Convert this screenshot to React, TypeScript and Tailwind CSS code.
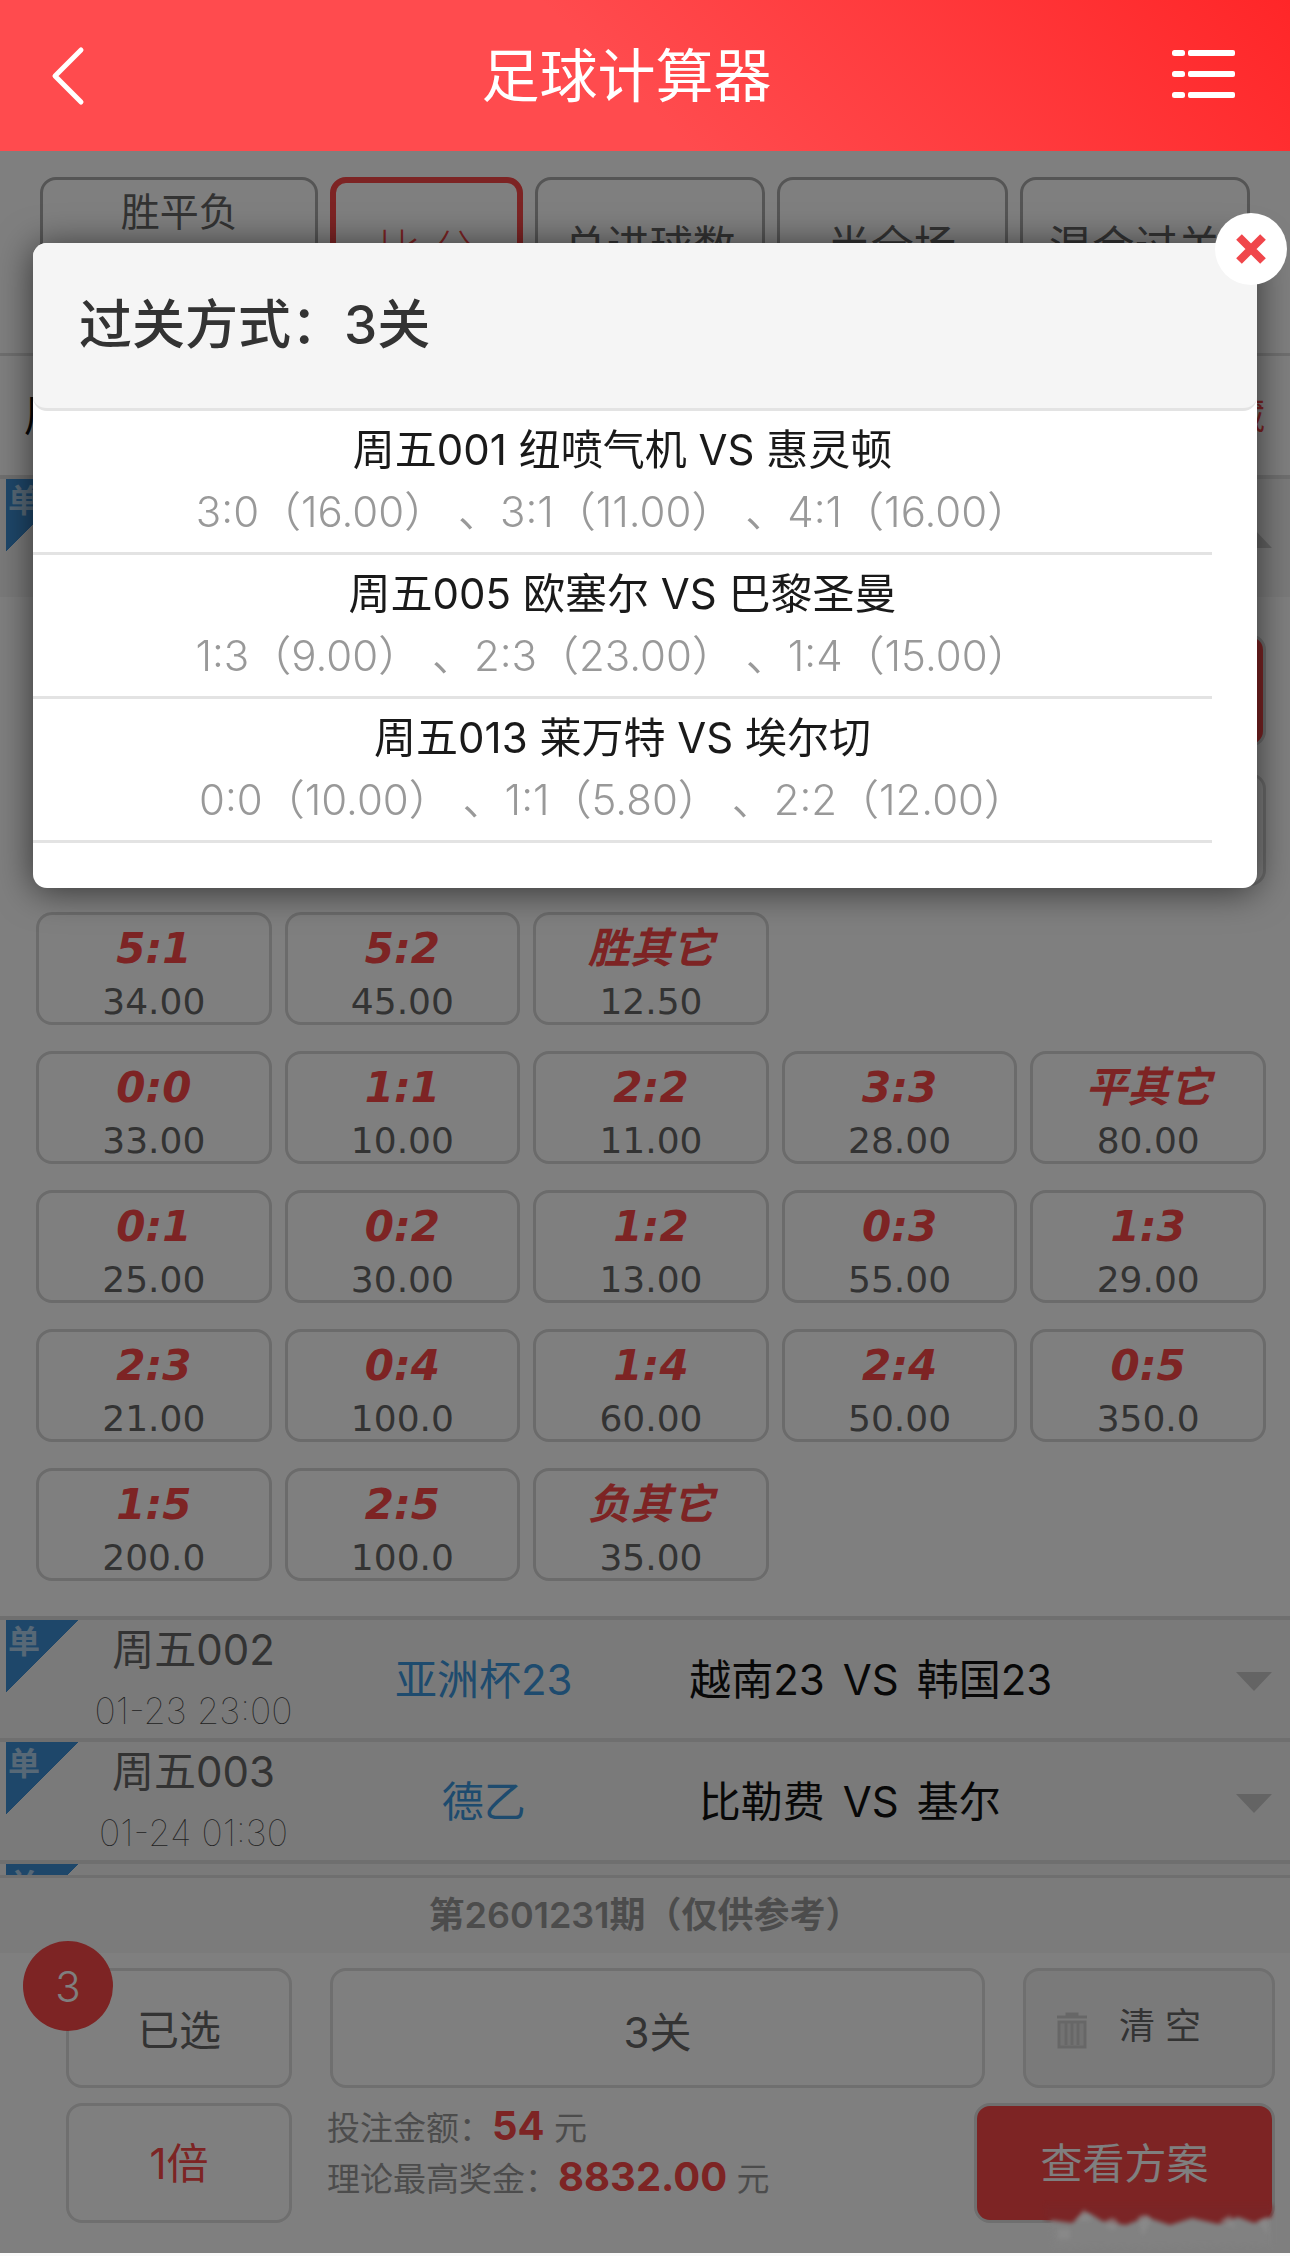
import { useState } from "react";
import clsx from "clsx";

type Score = { score: string; odds?: string; picked?: boolean };
type Match = { no: string; time: string; league: string; home: string; away: string };
type Pick = { title: string; options: [string, string][] };

const SCORES: Score[][] = [
  [
    { score: "1:0" },
    { score: "2:0" },
    { score: "2:1" },
    { score: "3:0", odds: "16.00", picked: true },
    { score: "3:1", odds: "11.00", picked: true },
  ],
  [
    { score: "3:2" },
    { score: "4:0" },
    { score: "4:1", odds: "16.00", picked: true },
    { score: "4:2" },
    { score: "5:0" },
  ],
  [
    { score: "5:1", odds: "34.00" },
    { score: "5:2", odds: "45.00" },
    { score: "胜其它", odds: "12.50" },
  ],
  [
    { score: "0:0", odds: "33.00" },
    { score: "1:1", odds: "10.00" },
    { score: "2:2", odds: "11.00" },
    { score: "3:3", odds: "28.00" },
    { score: "平其它", odds: "80.00" },
  ],
  [
    { score: "0:1", odds: "25.00" },
    { score: "0:2", odds: "30.00" },
    { score: "1:2", odds: "13.00" },
    { score: "0:3", odds: "55.00" },
    { score: "1:3", odds: "29.00" },
  ],
  [
    { score: "2:3", odds: "21.00" },
    { score: "0:4", odds: "100.0" },
    { score: "1:4", odds: "60.00" },
    { score: "2:4", odds: "50.00" },
    { score: "0:5", odds: "350.0" },
  ],
  [
    { score: "1:5", odds: "200.0" },
    { score: "2:5", odds: "100.0" },
    { score: "负其它", odds: "35.00" },
  ],
];

const MATCHES: Match[] = [
  { no: "周五002", time: "01-23 23:00", league: "亚洲杯23", home: "越南23", away: "韩国23" },
  { no: "周五003", time: "01-24 01:30", league: "德乙", home: "比勒费", away: "基尔" },
];

const PICKS: Pick[] = [
  { title: "周五001 纽喷气机 VS 惠灵顿", options: [["3:0", "16.00"], ["3:1", "11.00"], ["4:1", "16.00"]] },
  { title: "周五005 欧塞尔 VS 巴黎圣曼", options: [["1:3", "9.00"], ["2:3", "23.00"], ["1:4", "15.00"]] },
  { title: "周五013 莱万特 VS 埃尔切", options: [["0:0", "10.00"], ["1:1", "5.80"], ["2:2", "12.00"]] },
];

const TABS = ["胜平负", "比 分", "总进球数", "半全场", "混合过关"];

// rows of the score grid that sit behind the dialog while it is open
const COVERED_ROWS = 2;

function Header() {
  return (
    <header className="flex h-[151px] shrink-0 items-center justify-between bg-[linear-gradient(45deg,#ff4b4e_48%,#ff2628)] pl-[51px] pr-[55px] text-white">
      <button type="button" aria-label="返回">
        <svg width="34" height="60" viewBox="0 0 34 60" fill="none" stroke="currentColor" strokeWidth="5" strokeLinecap="round" strokeLinejoin="round">
          <path d="M30 4 4 30l26 26" />
        </svg>
      </button>
      <h1 className="pr-1 text-[58px] leading-[80px]">足球计算器</h1>
      <button type="button" aria-label="菜单" className="pb-1">
        <svg width="63" height="50" viewBox="0 0 63 50" fill="currentColor">
          {[1, 22, 43].map((y) => (
            <g key={y}>
              <rect x="0" y={y} width="13" height="6" rx="2.5" />
              <rect x="16" y={y} width="47" height="6" rx="2" />
            </g>
          ))}
        </svg>
      </button>
    </header>
  );
}

function Tabs() {
  const [active, setActive] = useState(1);
  return (
    <nav className="grid grid-cols-[29fr_20fr_24fr_24fr_24fr] gap-3 px-10 pb-[37px] pt-[26px]">
      {TABS.map((tab, i) => (
        <button
          key={tab}
          type="button"
          onClick={() => setActive(i)}
          className={clsx(
            "flex h-[139px] justify-center whitespace-nowrap rounded-2xl",
            i === 0 ? "items-start pt-1 text-[39px] leading-[56px]" : "items-center text-[43px]",
            i === active ? "border-[6px] border-[#fa4848] pt-2 font-light text-[#fa4848]" : "border-[3px] border-[#aaa] text-[#666]"
          )}
        >
          {tab}
        </button>
      ))}
    </nav>
  );
}

function SingleBadge() {
  return (
    <span className="absolute left-[6px] top-0 h-[73px] w-[73px] bg-[linear-gradient(135deg,#3c8fd4_50%,transparent_50%)] pl-[2px] text-[32px] font-bold leading-[44px] text-white/60">
      单
    </span>
  );
}

function Arrow({ up }: { up?: boolean }) {
  return (
    <svg width="36" height="19" viewBox="0 0 36 19" className="fill-[#c8c8c8]">
      <path d={up ? "M0 19 18 0l18 19z" : "M0 0h36L18 19z"} />
    </svg>
  );
}

function MatchRow({ match, open }: { match?: Match; open?: boolean }) {
  return (
    <div className="relative grid h-[122px] shrink-0 grid-cols-[30%_15%_45%_10%] items-center border-t-4 border-[#dfdfdf] bg-[#f5f5f5] text-[42px]">
      <SingleBadge />
      <div className="self-start text-center">
        <div className="leading-[60px] text-[#666]">{match?.no}</div>
        <div className="text-[36px] font-thin leading-[62px] text-[#444]">{match?.time}</div>
      </div>
      <div className="pb-1 text-center text-[#3c96dc]">{match?.league}</div>
      <div className="grid grid-cols-[1fr_auto_1fr] gap-[18px] pb-1 text-[#111]">
        {match && (
          <>
            <span className="text-right">{match.home}</span>
            <span>VS</span>
            <span>{match.away}</span>
          </>
        )}
      </div>
      <div className="flex justify-end pr-[18px]">
        <Arrow up={open} />
      </div>
    </div>
  );
}

function ScoreGrid({ covered }: { covered: boolean }) {
  return (
    <div className="flex flex-col gap-[26px] bg-white pb-[35px] pl-9 pr-6 pt-[37px] font-['DejaVu_Sans','Noto_Sans_CJK_SC',sans-serif]">
      {SCORES.map((row, i) => (
        <div key={i} className="grid grid-cols-5 gap-[13px]">
          {row.map((cell) => (
            <button
              key={cell.score}
              type="button"
              aria-label={cell.score}
              aria-pressed={!!cell.picked}
              className={clsx(
                "h-[113px] rounded-2xl border-[3px] border-[#d6d6d6] pt-[6px]",
                cell.picked ? "bg-[#fa4848] text-white" : "text-[#666]"
              )}
            >
              {!(covered && i < COVERED_ROWS) && (
                <>
                  <span className={clsx("block text-[42px] font-bold italic leading-[56px]", !cell.picked && "text-[#fa4848]")}>
                    {cell.score}
                  </span>
                  <span className="block text-[36px] leading-[50px]">{cell.odds}</span>
                </>
              )}
            </button>
          ))}
        </div>
      ))}
    </div>
  );
}

const BOX = "flex h-[120px] items-center justify-center rounded-2xl border-[3px] border-[#dedede]";

function BetBar() {
  return (
    <footer className="shrink-0 border-t-[3px] border-[#dfdfdf] bg-white">
      <p className="bg-[#f7f7f7] text-center text-[36px] font-semibold leading-[75px] text-[#999]">
        第2601231期（仅供参考）
      </p>
      <div className="flex flex-col gap-[15px] pb-[30px] pl-[66px] pr-[15px] pt-[15px] text-[42px] text-[#666]">
        <div className="flex gap-[38px]">
          <button type="button" className={clsx(BOX, "relative w-[226px] pt-1")}>
            已选
            <span className="absolute -left-[46px] -top-[30px] flex h-[90px] w-[90px] items-center justify-center rounded-full bg-[#fa4848] font-light text-white">
              3
            </span>
          </button>
          <button type="button" className={clsx(BOX, "flex-1 pt-2")}>3关</button>
          <button type="button" className={clsx(BOX, "w-[252px] gap-8 bg-[#f5f5f5] pr-10 text-[36px]")}>
            <svg width="30" height="37" viewBox="0 0 30 37" fill="none" stroke="#cfcfcf" strokeWidth="3" className="mt-1">
              <path d="M0 5h30M10 4V2h10v2" />
              <path d="M2 10v25h26V10z" fill="#e4e4e4" />
              <path d="M9 11v22M15 11v22M21 11v22" />
            </svg>
            <span className="pb-1">清 空</span>
          </button>
        </div>
        <div className="flex">
          <button type="button" className={clsx(BOX, "w-[226px] text-[#fa4848]")}>1倍</button>
          <div className="flex-1 pl-[35px] text-[33px] leading-[51px] text-[#999]">
            <p>
              投注金额：<b className="text-[40px] leading-none text-[#fa4848]">54</b> 元
            </p>
            <p>
              理论最高奖金：<b className="text-[40px] leading-none text-[#fa4848]">8832.00</b> 元
            </p>
          </div>
          <button type="button" className={clsx(BOX, "w-[301px] bg-[#fa4848] text-white")}>查看方案</button>
        </div>
      </div>
    </footer>
  );
}

function PlanDialog({ onClose }: { onClose: () => void }) {
  return (
    <div
      role="dialog"
      aria-labelledby="plan-title"
      className="absolute inset-x-[33px] top-[92px] rounded-[14px] bg-white pb-[45px] shadow-[0_3px_36px_rgba(0,0,0,0.6)]"
    >
      <h2
        id="plan-title"
        className="rounded-[14px] border-b-[3px] border-[#e3e3e3] bg-[#f5f5f5] pl-[46px] text-[53px] font-medium leading-[165px] text-[#333]"
      >
        过关方式：3关
      </h2>
      <button
        type="button"
        aria-label="关闭"
        onClick={onClose}
        className="absolute -right-[30px] -top-[30px] flex h-[72px] w-[72px] items-center justify-center rounded-full bg-white"
      >
        <svg width="30" height="30" viewBox="0 0 30 30" stroke="#f0464b" strokeWidth="8">
          <path d="M3 3 27 27M27 3 3 27" />
        </svg>
      </button>
      <ul className="mr-[45px] text-center text-[42px] leading-[62px]">
        {PICKS.map((pick) => (
          <li key={pick.title} className="border-b-[3px] border-[#e3e3e3] pb-[9px] pt-2">
            <p className="text-[#1a1a1a]">{pick.title}</p>
            <p className="pr-5 font-[350] text-[#999]">
              {pick.options.map(([score, odds]) => `${score}（${odds}）`).join(" 、")}
            </p>
          </li>
        ))}
      </ul>
    </div>
  );
}

// faint smear left over the corner of the submit button
function Smear() {
  return (
    <svg width="236" height="56" viewBox="0 0 236 56" className="pointer-events-none absolute bottom-0 right-3">
      <g className="blur-[2px]">
        <path d="M8 16H230V48L12 50z" fill="#818181" />
        <path d="M2 8H230V20L212 26 196 20 176 27 150 21 128 28 104 20 84 28 60 24 44 14 30 26 2 22z" fill="#7b2526" />
      </g>
      <g className="blur-[2px]" fill="#8e8e8e" opacity="0.6">
        <path d="M34 24l8-12 8 12zM96 20q14-6 12 6l-8 14zM178 24l10-6 6 14z" />
        <circle cx="70" cy="27" r="6" />
        <path d="M16 32h12v10H16zM216 24l10-4v18z" />
      </g>
    </svg>
  );
}

export default function App() {
  const [open, setOpen] = useState(true);

  return (
    <div lang="zh-CN" className="flex h-screen flex-col bg-[#fafafa] pb-[3px] font-['Inter','Noto_Sans_CJK_SC',sans-serif]">
      <Header />
      <div className="relative flex min-h-0 flex-1 flex-col">
        <main className="min-h-0 flex-1 overflow-y-auto bg-white [scrollbar-width:none]">
          <Tabs />
          <div className="flex h-[122px] items-center justify-between border-t-[3px] border-[#dfdfdf] pl-6 pr-[25px] text-[42px]">
            <span className="text-[#111]">周五</span>
            <button type="button" className="text-[36px] text-[#fa4848]">隐藏</button>
          </div>
          <MatchRow open />
          <ScoreGrid covered={open} />
          {MATCHES.map((match) => (
            <MatchRow key={match.no} match={match} />
          ))}
          <MatchRow />
        </main>
        <BetBar />
        {open && (
          <>
            <div className="absolute inset-0 bg-black/50" />
            <PlanDialog onClose={() => setOpen(false)} />
            <Smear />
          </>
        )}
      </div>
    </div>
  );
}
